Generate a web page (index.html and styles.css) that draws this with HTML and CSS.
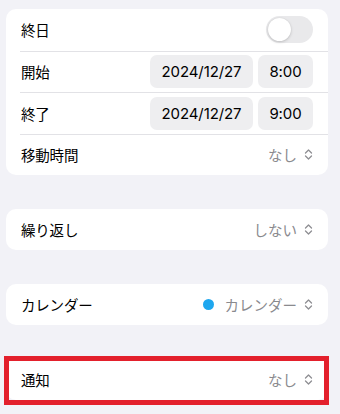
FILE: index.html
```html
<!DOCTYPE html>
<html lang="ja">
<head>
<meta charset="utf-8">
<link rel="stylesheet" href="styles.css">
</head>
<body>
<div class="page">
  <div class="card multi">
    <div class="row">
      <span class="label">終日</span>
      <span class="toggle"><span class="knob"></span></span>
    </div>
    <div class="row">
      <span class="label">開始</span>
      <span class="pills"><span class="pill date">2024/12/27</span><span class="pill time">8:00</span></span>
    </div>
    <div class="row">
      <span class="label">終了</span>
      <span class="pills"><span class="pill date">2024/12/27</span><span class="pill time">9:00</span></span>
    </div>
    <div class="row">
      <span class="label">移動時間</span>
      <span class="value">なし<svg class="chev" viewBox="0 0 9 11"><path d="M1.5 4 L4.5 1 L7.5 4 M1.5 7 L4.5 10 L7.5 7"/></svg></span>
    </div>
  </div>
  <div class="card">
    <div class="row">
      <span class="label">繰り返し</span>
      <span class="value">しない<svg class="chev" viewBox="0 0 9 11"><path d="M1.5 4 L4.5 1 L7.5 4 M1.5 7 L4.5 10 L7.5 7"/></svg></span>
    </div>
  </div>
  <div class="card">
    <div class="row">
      <span class="label">カレンダー</span>
      <span class="value"><span class="dot"></span>カレンダー<svg class="chev" viewBox="0 0 9 11"><path d="M1.5 4 L4.5 1 L7.5 4 M1.5 7 L4.5 10 L7.5 7"/></svg></span>
    </div>
  </div>
  <div class="card highlighted">
    <div class="row">
      <span class="label">通知</span>
      <span class="value">なし<svg class="chev" viewBox="0 0 9 11"><path d="M1.5 4 L4.5 1 L7.5 4 M1.5 7 L4.5 10 L7.5 7"/></svg></span>
    </div>
    <span class="frame"></span>
  </div>
</div>
</body>
</html>
```
FILE: styles.css
```css
html, body {
  margin: 0;
  padding: 0;
  background: #f2f2f7;
}
body {
  font-family: "Inter", "Noto Sans CJK JP", sans-serif;
  color: #000;
  min-height: 414px;
}
.page {
  display: flex;
  flex-direction: column;
  gap: 34px;
  padding: 9px 12px 14px 6px;
}
.card {
  background: #fff;
  border-radius: 10px;
  position: relative;
}
.row {
  box-sizing: border-box;
  height: 41px;
  display: flex;
  align-items: center;
  justify-content: space-between;
  padding: 0 15px 0 15px;
}
.multi .row {
  height: 41.5px;
}
.row + .row {
  border-top: 1px solid #e2e2e6;
  margin-left: 14px;
  padding-left: 1px;
}
.label {
  font-family: "Noto Sans CJK JP", sans-serif;
  font-size: 14.5px;
  letter-spacing: -0.2px;
}
.toggle {
  box-sizing: border-box;
  width: 47px;
  height: 27px;
  border-radius: 14px;
  background: #e9e9eb;
  display: flex;
  align-items: center;
  padding: 2px;
}
.knob {
  width: 23px;
  height: 23px;
  border-radius: 50%;
  background: #fff;
  box-shadow: 0 1px 3px rgba(0,0,0,0.18), 0 0 1px rgba(0,0,0,0.1);
}
.pills {
  display: flex;
  gap: 5px;
}
.pill {
  height: 33px;
  border-radius: 7px;
  background: #eeeef0;
  display: flex;
  align-items: center;
  justify-content: center;
  font-size: 15px;
  letter-spacing: -0.1px;
}
.pill.date { width: 103px; }
.pill.time { width: 55px; }
.value {
  display: flex;
  align-items: center;
  color: #8a8a8e;
  font-family: "Noto Sans CJK JP", sans-serif;
  font-size: 14.5px;
}
.chev {
  width: 9px;
  height: 11px;
  margin-left: 7px;
  fill: none;
  stroke: #8e8e93;
  stroke-width: 1.3;
  stroke-linecap: round;
  stroke-linejoin: round;
}
.dot {
  width: 11px;
  height: 11px;
  border-radius: 50%;
  background: #1ea7ef;
  margin-right: 11px;
}
.frame {
  position: absolute;
  top: -3px;
  left: -2px;
  right: -1px;
  bottom: -5px;
  border: 5px solid #e3202c;
  pointer-events: none;
}
```
